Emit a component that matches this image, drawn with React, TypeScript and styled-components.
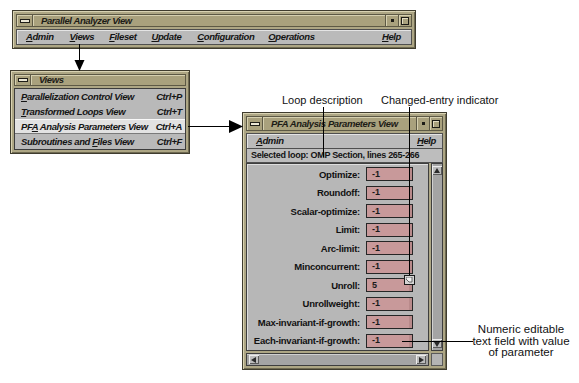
import React from 'react';
import styled, { createGlobalStyle } from 'styled-components';

const GlobalStyle = createGlobalStyle`
  html, body {
    margin: 0;
    padding: 0;
    background: #ffffff;
  }
  body {
    font-family: "Liberation Sans", Arial, sans-serif;
  }
`;

const UI_FONT = `"Liberation Sans", Arial, sans-serif`;

const mainMenu = [
  { m: 'A', rest: 'dmin', gap: 0 },
  { m: 'V', rest: 'iews', gap: 16 },
  { m: 'F', rest: 'ileset', gap: 15 },
  { m: 'U', rest: 'pdate', gap: 15 },
  { m: 'C', rest: 'onfiguration', gap: 16 },
  { m: 'O', rest: 'perations', gap: 14 },
];

const views = [
  { pre: '', m: 'P', post: 'arallelization Control View', key: 'Ctrl+P' },
  { pre: '', m: 'T', post: 'ransformed Loops View', key: 'Ctrl+T' },
  { pre: 'PF', m: 'A', post: ' Analysis Parameters View', key: 'Ctrl+A', active: true },
  { pre: 'Subroutines and ', m: 'F', post: 'iles View', key: 'Ctrl+F' },
];

const params = [
  { name: 'Optimize', value: '-1' },
  { name: 'Roundoff', value: '-1' },
  { name: 'Scalar-optimize', value: '-1' },
  { name: 'Limit', value: '-1' },
  { name: 'Arc-limit', value: '-1' },
  { name: 'Minconcurrent', value: '-1' },
  { name: 'Unroll', value: '5', changed: true },
  { name: 'Unrollweight', value: '-1' },
  { name: 'Max-invariant-if-growth', value: '-1' },
  { name: 'Each-invariant-if-growth', value: '-1' },
];

function TitleBarFor({ title, h, buttons = true }: { title: string; h: number; buttons?: boolean }) {
  return (
    <TitleBar $h={h}>
      <SysBox>
        <SysBar />
      </SysBox>
      <Title>{title}</Title>
      {buttons && (
        <>
          <TitleBtn>
            <Dot />
          </TitleBtn>
          <TitleBtn>
            <MaxSquare />
          </TitleBtn>
        </>
      )}
    </TitleBar>
  );
}

function Arrow({ dir }: { dir: 'up' | 'down' | 'left' | 'right' }) {
  const pts = {
    up: '1,6 7,6 4,1',
    down: '1,2 7,2 4,7',
    left: '6,1 6,7 1,4',
    right: '2,1 2,7 7,4',
  }[dir];
  return (
    <svg width="8" height="8" viewBox="0 0 8 8">
      <polygon points={pts} fill="#2a2a2a" />
    </svg>
  );
}

export default function App() {
  return (
    <>
      <GlobalStyle />
      <Canvas>
        {/* main application window */}
        <Win $x={12} $y={10} $w={404}>
          <TitleBarFor title="Parallel Analyzer View" h={13} />
          <MenuBar $h={16} $pl={9} $pr={10}>
            {mainMenu.map((it) => (
              <MenuItem key={it.m + it.rest} $gap={it.gap}>
                <U>{it.m}</U>
                {it.rest}
              </MenuItem>
            ))}
            <MenuItem $right>
              <U>H</U>elp
            </MenuItem>
          </MenuBar>
        </Win>

        {/* views pulldown */}
        <Win $x={10} $y={70} $w={180}>
          <TitleBarFor title="Views" h={12} buttons={false} />
          <ItemList>
            {views.map((v) => (
              <Item key={v.key} $active={v.active}>
                <span>
                  {v.pre}
                  <U>{v.m}</U>
                  {v.post}
                </span>
                <span>{v.key}</span>
              </Item>
            ))}
          </ItemList>
        </Win>

        {/* parameters window */}
        <Win $x={242} $y={112} $w={205} $h={258}>
          <TitleBarFor title="PFA Analysis Parameters View" h={15} />
          <MenuBar $h={16} $pl={9} $pr={6}>
            <MenuItem>
              <U>A</U>dmin
            </MenuItem>
            <MenuItem $right>
              <U>H</U>elp
            </MenuItem>
          </MenuBar>
          <LoopRow>Selected loop: OMP Section, lines 265-266</LoopRow>
          <Body>
            <List>
              {params.map((p) => (
                <React.Fragment key={p.name}>
                  <Label>{p.name}:</Label>
                  <Field>
                    {p.value}
                    {p.changed && (
                      <Badge>
                        <svg width="7" height="6" viewBox="0 0 7 6">
                          <polygon points="0,0 6,0 6,5 3,5 0,2" fill="#f2f2f2" stroke="#444" strokeWidth="0.8" />
                        </svg>
                      </Badge>
                    )}
                  </Field>
                </React.Fragment>
              ))}
            </List>
            <VScroll>
              <ArrowBox>
                <Arrow dir="up" />
              </ArrowBox>
              <Trough />
              <ArrowBox>
                <Arrow dir="down" />
              </ArrowBox>
            </VScroll>
          </Body>
          <HRow>
            <HScroll>
              <ArrowBox>
                <Arrow dir="left" />
              </ArrowBox>
              <Trough />
              <ArrowBox>
                <Arrow dir="right" />
              </ArrowBox>
            </HScroll>
            <Corner />
          </HRow>
        </Win>

        <Note $x={282} $y={94}>Loop description</Note>
        <Note $x={381} $y={94}>Changed-entry indicator</Note>
        <NoteBlock $x={472} $y={324}>
          Numeric editable
          <br />
          text field with value
          <br />
          of parameter
        </NoteBlock>

        <Leaders width={579} height={383} viewBox="0 0 579 383">
          <g stroke="#000" strokeWidth="1" shapeRendering="crispEdges">
            <line x1="79.5" y1="44" x2="79.5" y2="62" />
            <line x1="188" y1="126.5" x2="231" y2="126.5" />
            <line x1="323.5" y1="107" x2="323.5" y2="157" />
            <line x1="409.5" y1="107" x2="409.5" y2="275" />
            <line x1="402" y1="341.5" x2="473" y2="341.5" />
          </g>
          <polygon points="74.5,60 84.5,60 79.5,71" fill="#000" />
          <polygon points="229,120 229,133 243,126.5" fill="#000" />
        </Leaders>
      </Canvas>
    </>
  );
}

const Canvas = styled.div`
  position: relative;
  width: 579px;
  height: 383px;
  overflow: hidden;
  background: #ffffff;
`;

const Win = styled.div<{ $x: number; $y: number; $w: number; $h?: number }>`
  position: absolute;
  left: ${(p) => p.$x}px;
  top: ${(p) => p.$y}px;
  width: ${(p) => p.$w}px;
  ${(p) => (p.$h ? `height: ${p.$h}px;` : '')}
  box-sizing: border-box;
  display: flex;
  flex-direction: column;
  padding: 3px;
  background: #ada684;
  border: 1px solid #3f3c2e;
  box-shadow: inset 1px 1px 0 #d9d3b3, inset -1px -1px 0 #6f6a52;
`;

const TitleBar = styled.div<{ $h: number }>`
  display: flex;
  flex: none;
  height: ${(p) => p.$h}px;
  margin-bottom: 2px;
  box-sizing: border-box;
  border: 1px solid #5d5945;
  background: #a9a17d;
`;

const SysBox = styled.div`
  width: 15px;
  display: flex;
  align-items: center;
  justify-content: center;
  border-right: 1px solid #5d5945;
  box-shadow: inset 1px 1px 0 #d6d0b0;
`;

const SysBar = styled.div`
  width: 8px;
  height: 2px;
  border: 1px solid #1e1d18;
  background: #ece8d6;
`;

const Title = styled.div`
  flex: 1;
  display: flex;
  align-items: center;
  padding-left: 8px;
  font: italic bold 9.5px/1 ${UI_FONT};
  letter-spacing: -0.4px;
  color: #1c1b16;
  white-space: nowrap;
  box-shadow: inset 1px 1px 0 #d6d0b0;
`;

const TitleBtn = styled.div`
  width: 12px;
  display: flex;
  align-items: center;
  justify-content: center;
  border-left: 1px solid #5d5945;
  box-shadow: inset 1px 1px 0 #d6d0b0;
`;

const Dot = styled.div`
  width: 3px;
  height: 3px;
  background: #1c1b16;
`;

const MaxSquare = styled.div`
  width: 6px;
  height: 6px;
  border: 1px solid #1c1b16;
  box-shadow: inset 1px 1px 0 #e2dcc2;
`;

const MenuBar = styled.div<{ $h: number; $pl: number; $pr: number }>`
  display: flex;
  align-items: center;
  flex: none;
  height: ${(p) => p.$h}px;
  box-sizing: border-box;
  padding: 0 ${(p) => p.$pr}px 0 ${(p) => p.$pl}px;
  background: #bababa;
  border: 1px solid #4f4f4f;
  box-shadow: inset 1px 1px 0 #e4e4e4;
`;

const MenuItem = styled.span<{ $gap?: number; $right?: boolean }>`
  font: italic bold 9.5px/1 ${UI_FONT};
  letter-spacing: -0.4px;
  color: #141414;
  white-space: nowrap;
  margin-left: ${(p) => (p.$right ? 'auto' : `${p.$gap ?? 0}px`)};
`;

const U = styled.span`
  text-decoration: underline;
  text-underline-offset: 1px;
`;

const ItemList = styled.div`
  display: flex;
  flex-direction: column;
  border: 1px solid #3c3c3c;
  background: #b9b9b9;
`;

const Item = styled.div<{ $active?: boolean }>`
  display: flex;
  justify-content: space-between;
  align-items: center;
  height: 15px;
  padding: 0 3px 0 6px;
  font: italic bold 9.5px/1 ${UI_FONT};
  letter-spacing: -0.4px;
  color: #151515;
  white-space: nowrap;
  background: ${(p) => (p.$active ? '#e2e2e2' : '#b9b9b9')};
  box-shadow: ${(p) => (p.$active ? 'inset 0 1px 0 #f8f8f8, inset 0 -1px 0 #7a7a7a' : 'none')};
`;

const LoopRow = styled.div`
  display: flex;
  align-items: center;
  flex: none;
  height: 14px;
  box-sizing: border-box;
  padding-left: 4px;
  background: #bdbdbd;
  border: 1px solid #4f4f4f;
  border-top: none;
  font: bold 9px/1 ${UI_FONT};
  letter-spacing: -0.3px;
  color: #141414;
  white-space: nowrap;
`;

const Body = styled.div`
  flex: 1;
  min-height: 0;
  display: flex;
  gap: 2px;
`;

const List = styled.div`
  flex: 1;
  display: grid;
  grid-template-columns: 1fr 47px;
  grid-auto-rows: 18.5px;
  column-gap: 6px;
  align-content: start;
  padding: 1px 15px 0 0;
  background: #b7b7b7;
  border: 1px solid #3e3e3e;
  box-shadow: inset 1px 1px 0 #dedede;
`;

const Label = styled.div`
  justify-self: end;
  align-self: center;
  font: bold 9.5px/1 ${UI_FONT};
  letter-spacing: -0.25px;
  color: #111;
  white-space: nowrap;
`;

const Field = styled.div`
  position: relative;
  align-self: center;
  height: 14px;
  box-sizing: border-box;
  display: flex;
  align-items: center;
  padding-left: 5px;
  background: #c8999a;
  border: 1px solid #262626;
  box-shadow: inset -3px 0 0 #b98a8b;
  font: bold 9px/1 ${UI_FONT};
  color: #1a1a1a;
`;

const Badge = styled.div`
  position: absolute;
  right: -3px;
  top: -4px;
  width: 11px;
  height: 10px;
  box-sizing: border-box;
  display: flex;
  align-items: center;
  justify-content: center;
  background: #d4d4d4;
  border: 1px solid #1a1a1a;
`;

const VScroll = styled.div`
  width: 12px;
  display: flex;
  flex-direction: column;
  box-sizing: border-box;
  padding: 2px 0;
  background: #a4a4a4;
  border: 1px solid #3e3e3e;
  box-shadow: inset 1px 0 0 #d0d0d0;
`;

const HRow = styled.div`
  display: flex;
  flex: none;
  height: 13px;
  margin-top: 2px;
  gap: 2px;
`;

const HScroll = styled.div`
  flex: 1;
  display: flex;
  box-sizing: border-box;
  padding: 0 2px;
  align-items: center;
  background: #a4a4a4;
  border: 1px solid #3e3e3e;
  box-shadow: inset 0 1px 0 #d0d0d0;
`;

const ArrowBox = styled.div`
  width: 10px;
  height: 9px;
  flex: none;
  display: flex;
  align-items: center;
  justify-content: center;
  background: #bcbcbc;
  box-shadow: inset 1px 1px 0 #ececec, inset -1px -1px 0 #5a5a5a;
`;

const Trough = styled.div`
  flex: 1;
`;

const Corner = styled.div`
  width: 12px;
  background: #b4b4b4;
  border: 1px solid #5a5a5a;
  box-sizing: border-box;
`;

const Note = styled.div<{ $x: number; $y: number }>`
  position: absolute;
  left: ${(p) => p.$x}px;
  top: ${(p) => p.$y}px;
  z-index: 6;
  font: 11px/12px "Liberation Sans", Arial, sans-serif;
  color: #111;
  white-space: nowrap;
`;

const NoteBlock = styled(Note)`
  width: 98px;
  text-align: center;
  font-size: 11.5px;
  line-height: 11.5px;
`;

const Leaders = styled.svg`
  position: absolute;
  left: 0;
  top: 0;
  z-index: 5;
  pointer-events: none;
`;
